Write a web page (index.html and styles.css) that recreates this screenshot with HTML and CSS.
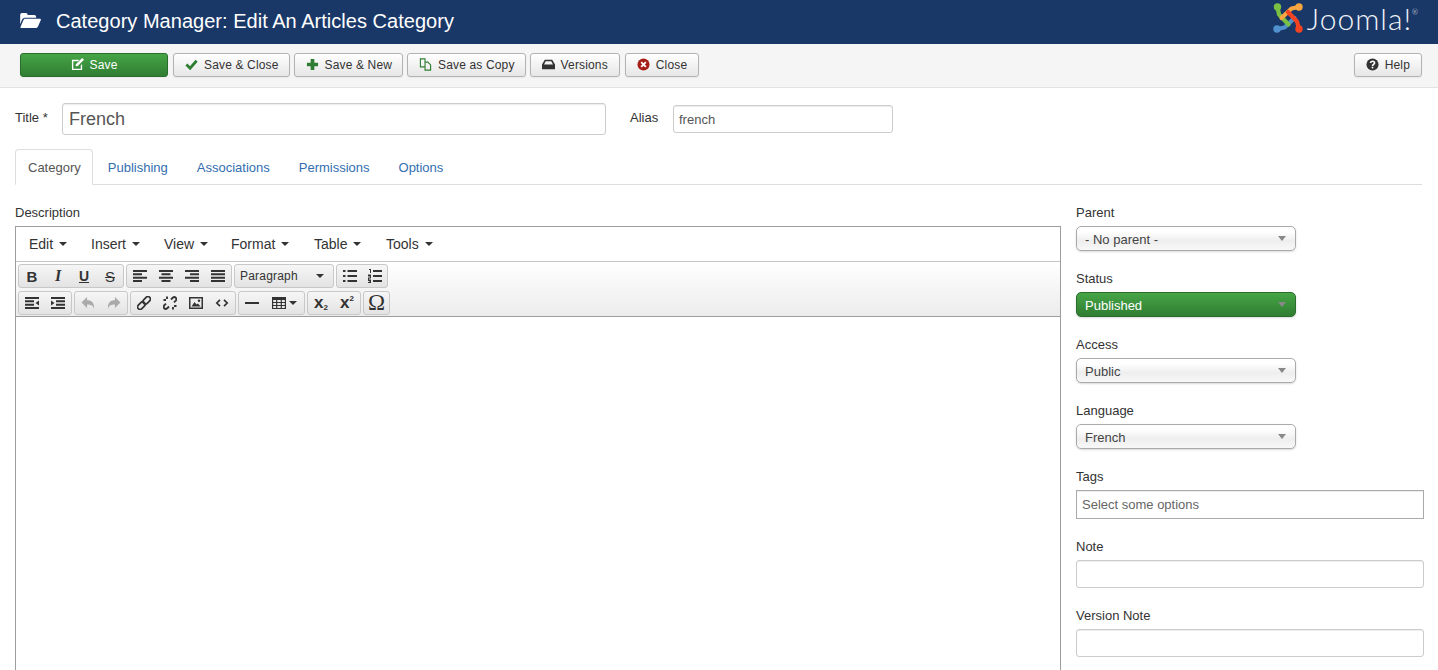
FILE: index.html
```html
<!DOCTYPE html>
<html lang="en">
<head>
  <meta charset="UTF-8">
  <title>Category Manager: Edit An Articles Category</title>
  <link rel="stylesheet" href="styles.css">
</head>
<body>

  <header class="header">
    <svg class="header-icon" viewBox="0 0 22 16"><path fill="#fff" d="M0 2q0-2 2-2h4q2 0 2 2h7q2 0 2 2v1H5Q3 5 2 7L0 12zM5 6h16q1.500 0 1 1.500l-3 7q-.5 1.500-2 1.500H1q-1 0-.5-1.500l3-7Q4 6 5 6z"/></svg>
    <h1>Category Manager: Edit An Articles Category</h1>
    <div class="logo">
      <svg class="logo-mark" viewBox="0 0 30 30" fill="none" stroke-width="4.200" stroke-linecap="round" stroke-linejoin="round">
        <path stroke="#5091cd" d="M4 26l7.500-1.500L21.500 15"/><circle cx="4" cy="26" r="3.700" fill="#5091cd"/>
        <path stroke="#7ac143" d="M4.500 4l1.500 7.500L15.500 21.500"/><circle cx="4.500" cy="4" r="3.700" fill="#7ac143"/>
        <path stroke="#f9a541" d="M26 4l-7.500 1.500L8.500 15"/><circle cx="26" cy="4" r="3.700" fill="#f9a541"/>
        <path stroke="#f44321" d="M26 26l-2-7.500L15 9"/><circle cx="26" cy="26" r="3.700" fill="#f44321"/>
      </svg>
      <span class="logo-text">Joomla!<sup class="logo-reg">®</sup></span>
    </div>
  </header>

  <div class="toolbar">
    <button class="btn btn-save">
      <svg class="ico" viewBox="0 0 14 14"><path fill="#fff" d="M1 2h8L7.500 3.500H2.500v8h8V8L12 6.500V13H1zM12 0l2 2-7 7H5V7z"/></svg>
      Save
    </button>
    <button class="btn btn-tight">
      <svg class="ico" viewBox="0 0 14 14"><path fill="none" stroke="#2f7d32" stroke-width="3" d="M1.500 7l4 4 7-8"/></svg>
      Save &amp; Close
    </button>
    <button class="btn btn-tight">
      <svg class="ico" viewBox="0 0 14 14"><path fill="#2f7d32" d="M5 1h4v4h4v4H9v4H5V9H1V5h4z"/></svg>
      Save &amp; New
    </button>
    <button class="btn btn-tight">
      <svg class="ico" viewBox="0 0 14 14"><path fill="none" stroke="#2f7d32" stroke-width="1.200" d="M1.500 1h5v8.500h-5zM6.500 4.500h3l3 3v5.500h-6V9.500"/></svg>
      Save as Copy
    </button>
    <button class="btn">
      <svg class="ico" viewBox="0 0 14 12"><path fill="#333" d="M3 1h8l3 5v5H0V6zM4 2.500 2.200 6h9.600L10 2.500z"/></svg>
      Versions
    </button>
    <button class="btn btn-spaced">
      <svg class="ico" viewBox="0 0 14 14"><circle cx="7" cy="7" r="6.500" fill="#a51f18"/><path stroke="#fff" stroke-width="2" d="M4.500 4.500l5 5m0-5l-5 5"/></svg>
      Close
    </button>
    <button class="btn btn-help">
      <svg class="ico" viewBox="0 0 14 14"><circle cx="7" cy="7" r="6.500" fill="#333"/><path fill="none" stroke="#fff" stroke-width="1.800" d="M4.800 5.400Q5 3.500 7 3.500q2.200 0 2.200 1.800C9.200 6.800 7 6.800 7 8.500"/><path stroke="#fff" stroke-width="1.800" d="M7 9.400v1.800"/></svg>
      Help
    </button>
  </div>

  <div class="content">
    <div class="title-row">
      <label class="title-label">Title *</label>
      <input class="title-input" type="text" value="French">
      <label class="alias-label">Alias</label>
      <input class="alias-input" type="text" value="french">
    </div>

    <ul class="tabs">
      <li class="active">Category</li>
      <li>Publishing</li>
      <li>Associations</li>
      <li>Permissions</li>
      <li>Options</li>
    </ul>

    <div class="columns">
      <div class="main-col">
        <div class="desc-label">Description</div>
        <div class="editor">
          <div class="menubar">
            <span class="menu-edit">Edit<i class="caret"></i></span>
            <span class="menu-insert">Insert<i class="caret"></i></span>
            <span class="menu-view">View<i class="caret"></i></span>
            <span class="menu-format">Format<i class="caret"></i></span>
            <span class="menu-table">Table<i class="caret"></i></span>
            <span>Tools<i class="caret"></i></span>
          </div>
          <div class="mce-toolbar">
            <div class="mce-row">
              <div class="mce-group">
                <span class="mce-btn fmt-b">B</span>
                <span class="mce-btn fmt-i">I</span>
                <span class="mce-btn fmt-u">U</span>
                <span class="mce-btn fmt-s">S</span>
              </div>
              <div class="mce-group">
                <span class="mce-btn"><svg class="mce-ico" viewBox="0 0 14 12"><path d="M0 0h14v2H0zM0 3.300h9v2H0zM0 6.700h14v2H0zM0 10h9v2H0z"/></svg></span>
                <span class="mce-btn"><svg class="mce-ico" viewBox="0 0 14 12"><path d="M0 0h14v2H0zM2.500 3.300h9v2h-9zM0 6.700h14v2H0zM2.500 10h9v2h-9z"/></svg></span>
                <span class="mce-btn"><svg class="mce-ico" viewBox="0 0 14 12"><path d="M0 0h14v2H0zM5 3.300h9v2H5zM0 6.700h14v2H0zM5 10h9v2H5z"/></svg></span>
                <span class="mce-btn"><svg class="mce-ico" viewBox="0 0 14 12"><path d="M0 0h14v2H0zM0 3.300h14v2H0zM0 6.700h14v2H0zM0 10h14v2H0z"/></svg></span>
              </div>
              <div class="mce-group">
                <span class="mce-list">Paragraph<i class="caret"></i></span>
              </div>
              <div class="mce-group mce-narrow">
                <span class="mce-btn"><svg class="mce-ico" viewBox="0 0 14 12"><path d="M0 0h2.500v2H0zM4.500 0H14v2H4.500zM0 5h2.500v2H0zM4.500 5H14v2H4.500zM0 10h2.500v2H0zM4.500 10H14v2H4.500z"/></svg></span>
                <span class="mce-btn"><svg class="mce-ico mce-ico-tall" viewBox="0 0 14 14"><path d="M1 0h2v4H2V1H1zM0 5.500h3v4H1v1h2v1H0v-3h2v-1H0zM0 11h3v3H0v-1h2v-.2H1v-.6h1V12H0zM5 1h9v2H5zM5 6h9v2H5zM5 11h9v2H5z"/></svg></span>
              </div>
            </div>
            <div class="mce-row">
              <div class="mce-group">
                <span class="mce-btn"><svg class="mce-ico" viewBox="0 0 14 12"><path d="M0 0h14v2H0zM0 3.300h9v2H0zM0 6.700h9v2H0zM0 10h14v2H0zM14 3.500v5L10.500 6z"/></svg></span>
                <span class="mce-btn"><svg class="mce-ico" viewBox="0 0 14 12"><path d="M0 0h14v2H0zM5 3.300h9v2H5zM5 6.700h9v2H5zM0 10h14v2H0zM0 3.500v5L3.500 6z"/></svg></span>
              </div>
              <div class="mce-group mce-muted">
                <span class="mce-btn"><svg class="mce-ico" viewBox="0 0 14 13"><path d="M6 0v3.500c5 0 8 2.500 7.500 9.500-1-4-3-5-7.500-5v4L0 6z"/></svg></span>
                <span class="mce-btn"><svg class="mce-ico" viewBox="0 0 14 13"><path d="M8 0v3.500c-5 0-8 2.500-7.500 9.500 1-4 3-5 7.500-5v4l6-6z"/></svg></span>
              </div>
              <div class="mce-group">
                <span class="mce-btn"><svg class="mce-ico mce-ico-tall mce-line" viewBox="0 0 14 14" stroke-width="1.700"><g transform="rotate(-45 7 7)"><rect x="-1" y="4.500" width="8.500" height="5" rx="2.500"/><rect x="6.500" y="4.500" width="8.500" height="5" rx="2.500"/></g></svg></span>
                <span class="mce-btn"><svg class="mce-ico mce-ico-tall mce-line" viewBox="0 0 14 14" stroke-width="1.900"><path d="M8 3.500 9.800 1.700a2.300 2.300 0 0 1 3 0l-.1-.1a2.300 2.300 0 0 1 .1 3L11 6.400M6 10.500 4.200 12.300a2.300 2.300 0 0 1-3 0l.1.1a2.300 2.300 0 0 1-.1-3L3 7.600M.5 4h2.500M4 .5V3M13.500 10H11M10 13.500V11"/></svg></span>
                <span class="mce-btn"><svg class="mce-ico" viewBox="0 0 14 12"><path fill-rule="evenodd" d="M0 0h14v12H0zM1.500 1.500v9h11v-9zM2.500 9.500 5.500 5l2 2.500 1.500-1 2.500 3z"/><circle cx="10" cy="3.700" r="1.200"/></svg></span>
                <span class="mce-btn"><svg class="mce-ico mce-line" viewBox="0 0 14 12" stroke-width="1.700"><path d="M5 2.800 1.800 6 5 9.200M9 2.800 12.200 6 9 9.200"/></svg></span>
              </div>
              <div class="mce-group">
                <span class="mce-btn"><svg class="mce-ico" viewBox="0 0 14 12"><path d="M0 5h14v2H0z"/></svg></span>
                <span class="mce-btn mce-btn-table"><svg class="mce-ico" viewBox="0 0 14 12"><path fill-rule="evenodd" d="M0 0h14v12H0zM1.200 3v2h2.900V3zm4.100 0v2h3.400V3zm4.600 0v2h2.900V3zM1.200 6v2h2.900V6zm4.100 0v2h3.400V6zm4.600 0v2h2.900V6zM1.200 9v2h2.900V9zm4.100 0v2h3.400V9zm4.600 0v2h2.900V9z"/></svg><i class="caret"></i></span>
              </div>
              <div class="mce-group">
                <span class="mce-btn mce-script">x<sub>2</sub></span>
                <span class="mce-btn mce-script">x<sup>2</sup></span>
              </div>
              <div class="mce-group mce-narrow">
                <span class="mce-btn mce-omega">Ω</span>
              </div>
            </div>
          </div>
          <div class="edit-area"></div>
        </div>
      </div>

      <aside class="side-col">
        <div class="field">
          <label>Parent</label>
          <div class="select">- No parent -<i class="select-arrow"></i></div>
        </div>
        <div class="field">
          <label>Status</label>
          <div class="select select-green">Published<i class="select-arrow"></i></div>
        </div>
        <div class="field">
          <label>Access</label>
          <div class="select">Public<i class="select-arrow"></i></div>
        </div>
        <div class="field">
          <label>Language</label>
          <div class="select">French<i class="select-arrow"></i></div>
        </div>
        <div class="field">
          <label>Tags</label>
          <input class="side-input tags-input" type="text" placeholder="Select some options">
        </div>
        <div class="field">
          <label>Note</label>
          <input class="side-input" type="text">
        </div>
        <div class="field">
          <label>Version Note</label>
          <input class="side-input" type="text">
        </div>
      </aside>
    </div>
  </div>

</body>
</html>
```

FILE: styles.css
```css
html, body {
  height: 670px;
  overflow: hidden;
}
body {
  margin: 0;
  background: #fff;
  color: #333;
  font-family: "Liberation Sans", Arial, sans-serif;
  font-size: 13px;
}

/* header */
.header {
  display: flex;
  align-items: center;
  height: 44px;
  padding-left: 20px;
  background: #1a3867;
  color: #fff;
}
.header-icon {
  width: 21px;
  height: 15px;
  margin-bottom: 3px;
}
.header h1 {
  margin: 0 0 2px 15px;
  font-size: 20px;
  font-weight: 400;
  line-height: 40px;
  letter-spacing: 0.025px;
}
.logo {
  display: flex;
  align-items: flex-start;
  margin-left: auto;
  margin-right: 20px;
  height: 44px;
}
.logo-mark {
  width: 30px;
  height: 30px;
  margin-top: 3px;
}
.logo-text {
  margin-left: 4px;
  font-family: Lato, sans-serif;
  font-size: 30px;
  font-weight: 300;
  line-height: 36px;
  letter-spacing: 1px;
  color: #f0f3f7;
}
.logo-reg {
  font-size: 7px;
  line-height: 0;
  letter-spacing: 0;
  vertical-align: 15px;
}

/* toolbar */
.toolbar {
  display: flex;
  align-items: center;
  gap: 4px;
  height: 41px;
  padding: 0 16px 2px 20px;
  background: #f5f5f5;
  border-bottom: 1px solid #e3e3e3;
}
.btn {
  display: flex;
  align-items: center;
  justify-content: center;
  height: 24px;
  padding: 0 11px;
  border: 1px solid #b3b3b3;
  border-radius: 3px;
  background: linear-gradient(#ffffff, #e6e6e6);
  box-shadow: 0 1px 2px rgba(0,0,0,0.05);
  color: #333;
  font-family: "Liberation Sans", Arial, sans-serif;
  font-size: 12px;
  letter-spacing: 0.150px;
}
.ico {
  width: 13px;
  height: 13px;
  margin-right: 6px;
}
.btn-save {
  width: 148px;
  margin-right: 1px;
  background: linear-gradient(#46a546, #2f7d32);
  border-color: #2a6d2c;
  color: #fff;
}
.btn-tight {
  padding-right: 10px;
}
.btn-spaced {
  margin-left: 1px;
}
.btn-help {
  margin-left: auto;
}

/* title row */
.content {
  padding: 15px 16px 0 15px;
}
.title-row {
  display: flex;
  align-items: center;
  height: 32px;
}
.title-label {
  width: 47px;
  margin-bottom: 4px;
}
.title-input {
  width: 544px;
  height: 32px;
  box-sizing: border-box;
  padding: 1px 6px 0;
  border: 1px solid #ccc;
  border-radius: 3px;
  box-shadow: inset 0 1px 1px rgba(0,0,0,0.075);
  color: #555;
  font-family: "Liberation Sans", Arial, sans-serif;
  font-size: 18px;
}
.alias-label {
  margin-left: 24px;
  width: 43px;
  margin-bottom: 4px;
}
.alias-input {
  width: 220px;
  height: 28px;
  box-sizing: border-box;
  padding: 0 5px;
  border: 1px solid #ccc;
  border-radius: 3px;
  box-shadow: inset 0 1px 1px rgba(0,0,0,0.075);
  color: #555;
  font-family: "Liberation Sans", Arial, sans-serif;
  font-size: 13px;
}

/* tabs */
.tabs {
  display: flex;
  margin: 14px 0 0;
  padding: 0;
  height: 35px;
  list-style: none;
  border-bottom: 1px solid #ddd;
}
.tabs li {
  padding: 0 13px 0 14px;
  height: 36px;
  box-sizing: border-box;
  border: 1px solid transparent;
  line-height: 35px;
  color: #336eb0;
}
.tabs li.active {
  padding: 0 11px 0 12px;
  border-color: #ddd #ddd #fff;
  border-radius: 4px 4px 0 0;
  background: #fff;
  color: #555;
}

/* columns */
.columns {
  display: flex;
}
.main-col {
  flex: none;
  width: 1046px;
  margin-right: 15px;
}
.desc-label,
.field label {
  display: block;
  height: 15px;
  line-height: 15px;
}
.desc-label {
  margin-top: 20px;
  margin-bottom: 6px;
}
.editor {
  height: 460px;
  box-sizing: border-box;
  border: 1px solid #9e9e9e;
}

/* editor menu */
.menubar {
  display: flex;
  align-items: center;
  height: 34px;
  padding-left: 13px;
  border-bottom: 1px solid #c5c5c5;
  font-size: 14px;
  color: #333;
}
.menubar span {
  display: flex;
  align-items: center;
}
.menu-edit { width: 62px; }
.menu-insert { width: 73px; }
.menu-view { width: 67px; }
.menu-format { width: 83px; }
.menu-table { width: 72px; }
.caret {
  display: inline-block;
  width: 0;
  height: 0;
  margin-left: 6px;
  border-top: 4px solid #333;
  border-left: 4px solid transparent;
  border-right: 4px solid transparent;
}

/* editor buttons */
.mce-toolbar {
  padding: 2px 0 0 2px;
  height: 52px;
  background: linear-gradient(#fff, #ececec);
  border-bottom: 1px solid #9e9e9e;
}
.mce-row {
  display: flex;
  gap: 2px;
  height: 24px;
  margin-bottom: 3px;
}
.mce-group {
  display: flex;
  height: 24px;
  box-sizing: border-box;
  border: 1px solid #c8c8c8;
  border-radius: 3px;
  background: linear-gradient(#f6f6f6, #e3e3e3);
}
.mce-btn {
  display: flex;
  align-items: center;
  justify-content: center;
  width: 26px;
  height: 22px;
  font-size: 14px;
  color: #333;
}
.mce-narrow .mce-btn {
  width: 25px;
}
.mce-ico {
  width: 14px;
  height: 12px;
  fill: #333;
}
.mce-ico-tall {
  height: 14px;
}
.mce-line {
  fill: none;
  stroke: #333;
}
.mce-muted .mce-ico {
  fill: #aaa;
}
.fmt-b {
  font-weight: 700;
  font-size: 15px;
}
.fmt-i {
  font-family: "Liberation Serif", serif;
  font-style: italic;
  font-weight: 700;
  font-size: 16px;
}
.fmt-u {
  text-decoration: underline;
  font-weight: 700;
}
.fmt-s {
  text-decoration: line-through;
  font-size: 15px;
}
.mce-list {
  display: flex;
  align-items: center;
  width: 98px;
  padding-left: 5px;
  box-sizing: border-box;
  font-size: 12px;
  letter-spacing: 0.200px;
}
.mce-list .caret {
  margin-left: 18px;
}
.mce-group .mce-btn-table {
  width: 39px;
}
.mce-btn-table .caret {
  margin-left: 3px;
}
.mce-script {
  font-size: 17px;
  font-weight: 700;
}
.mce-script sub,
.mce-script sup {
  font-size: 8px;
  line-height: 8px;
}
.mce-script sub {
  align-self: flex-end;
  margin-bottom: 2px;
}
.mce-script sup {
  align-self: flex-start;
  margin-top: 3px;
}
.mce-omega {
  font-family: "Liberation Serif", serif;
  font-size: 23px;
}

/* right side */
.side-col {
  flex: none;
  width: 348px;
  padding-top: 20px;
}
.field {
  margin-bottom: 20px;
}
.field label {
  margin-bottom: 6px;
}
.select {
  position: relative;
  width: 220px;
  height: 25px;
  box-sizing: border-box;
  padding-left: 8px;
  border: 1px solid #aaa;
  border-radius: 5px;
  line-height: 26px;
  background: linear-gradient(#fff 20%, #eee 60%, #f8f8f8);
  box-shadow: 0 1px 2px rgba(0,0,0,0.15);
  color: #444;
}
.select-green {
  background: linear-gradient(#46a546, #2f7d32);
  border-color: #2a6d2c;
  color: #fff;
}
.select-arrow {
  position: absolute;
  right: 9px;
  top: 9px;
  width: 0;
  height: 0;
  border-top: 5px solid #888;
  border-left: 4px solid transparent;
  border-right: 4px solid transparent;
}
.side-input {
  display: block;
  width: 348px;
  height: 28px;
  box-sizing: border-box;
  padding: 0 5px;
  border: 1px solid #ccc;
  border-radius: 3px;
  box-shadow: inset 0 1px 1px rgba(0,0,0,0.075);
  font-family: "Liberation Sans", Arial, sans-serif;
  font-size: 13px;
}
.tags-input {
  height: 29px;
  border-color: #aaa;
  border-radius: 0;
}
.tags-input::placeholder {
  color: #666;
}
```
